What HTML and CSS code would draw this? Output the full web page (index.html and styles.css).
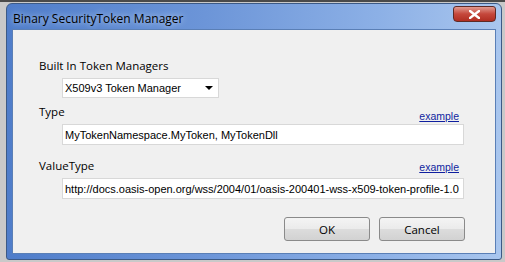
FILE: index.html
```html
<!DOCTYPE html>
<html lang="en">
<head>
    <meta charset="UTF-8">
    <title>Binary SecurityToken Manager</title>
    <link rel="stylesheet" href="styles.css">
</head>
<body>
    <div class="window">
        <div class="titlebar">
            <span class="title">Binary SecurityToken Manager</span>
            <button class="close">
                <svg width="11" height="9" viewBox="0 0 11 9"><path d="M1 1 L10 8 M10 1 L1 8" stroke="#fff" stroke-width="2.4" stroke-linecap="square"/></svg>
            </button>
        </div>
        <div class="panel">
            <div class="field">
                <label class="label">Built In Token Managers</label>
                <div class="select">
                    <span>X509v3 Token Manager</span>
                    <svg width="8" height="4" viewBox="0 0 8 4"><path d="M0 0 H8 L4 4 Z" fill="#000"/></svg>
                </div>
            </div>
            <div class="field first">
                <div class="label-row">
                    <label class="label">Type</label>
                    <a class="link" href="#">example</a>
                </div>
                <input class="input" type="text" value="MyTokenNamespace.MyToken, MyTokenDll">
            </div>
            <div class="field second">
                <div class="label-row">
                    <label class="label">ValueType</label>
                    <a class="link" href="#">example</a>
                </div>
                <input class="input" type="text" value="http://docs.oasis-open.org/wss/2004/01/oasis-200401-wss-x509-token-profile-1.0">
            </div>
            <div class="buttons">
                <button class="btn">OK</button>
                <button class="btn">Cancel</button>
            </div>
        </div>
    </div>
</body>
</html>
```
FILE: styles.css
```css
body {
    margin: 0;
    height: 262px;
    overflow: hidden;
    background: #c9c9c9;
    border-top: 2px solid #4a4a4a;
    box-sizing: border-box;
    font-family: "Open Sans", "Noto Sans", sans-serif;
}
.window {
    margin: 1px 3px 0 6px;
    height: 257px;
    border-radius: 6px 6px 3px 3px;
    border: 1px solid #3c5a86;
    background: linear-gradient(90deg, #4f7dca 0%, #6c95d8 40%, #8cb0e6 75%, #a9c6ee 100%);
    padding: 0 5px 5px 5px;
    display: flex;
    flex-direction: column;
    box-sizing: border-box;
}
.titlebar {
    height: 25px;
    display: flex;
    align-items: flex-start;
    justify-content: space-between;
}
.title {
    font-size: 12px;
    color: #000;
    margin: 6px 0 0 1px;
    text-shadow: 0 0 6px #dbe8f8;
}
.close {
    width: 43px;
    height: 16px;
    margin-top: 2px;
    border: 1px solid #5e2a26;
    border-radius: 3px 3px 4px 4px;
    background: linear-gradient(#e09a90, #c5473b 50%, #b02e22 100%);
    display: flex;
    align-items: center;
    justify-content: center;
    padding: 0;
}
.panel {
    flex: 1;
    background: #f0f0f0;
    border: 1px solid #5a7fb6;
    padding: 28px 31px 0 26px;
    display: flex;
    flex-direction: column;
}
.field {
    display: flex;
    flex-direction: column;
}
.field.first {
    margin-top: 6px;
}
.field.second {
    margin-top: 13px;
}
.label {
    font-size: 11.5px;
    color: #000;
    line-height: 16px;
}
.label-row {
    height: 20px;
    display: flex;
    justify-content: space-between;
    align-items: flex-start;
}
.link {
    align-self: flex-end;
    font-family: "Liberation Sans", Arial, sans-serif;
    font-size: 10.5px;
    color: #0f1f9f;
    margin: 0 5px 1px 0;
    line-height: 14px;
}
.second .link {
    margin-bottom: 4px;
}
.select {
    margin: 4px 0 0 23px;
    width: 157px;
    height: 20px;
    box-sizing: border-box;
    border: 1px solid #d8d8d8;
    background: #fff;
    display: flex;
    align-items: center;
    justify-content: space-between;
    padding: 0 5px 0 2px;
    font-family: "Liberation Sans", Arial, sans-serif;
    font-size: 11px;
}
.input {
    margin: 0 0 0 23px;
    height: 21px;
    box-sizing: border-box;
    border: 1px solid #d8d8d8;
    background: #fff;
    padding: 0 2px;
    font-family: "Liberation Sans", Arial, sans-serif;
    font-size: 11px;
    color: #000;
    outline: none;
}
.buttons {
    display: flex;
    justify-content: flex-end;
    gap: 9px;
    margin: 18px -1px 0 0;
}
.btn {
    width: 86px;
    height: 24px;
    border: 1px solid #8a8a8a;
    border-radius: 3px;
    background: linear-gradient(#f4f4f4 0%, #ebebeb 48%, #dcdcdc 52%, #d2d2d2 100%);
    font-family: "Open Sans", sans-serif;
    font-size: 11.5px;
    color: #000;
    padding: 0;
}
```
